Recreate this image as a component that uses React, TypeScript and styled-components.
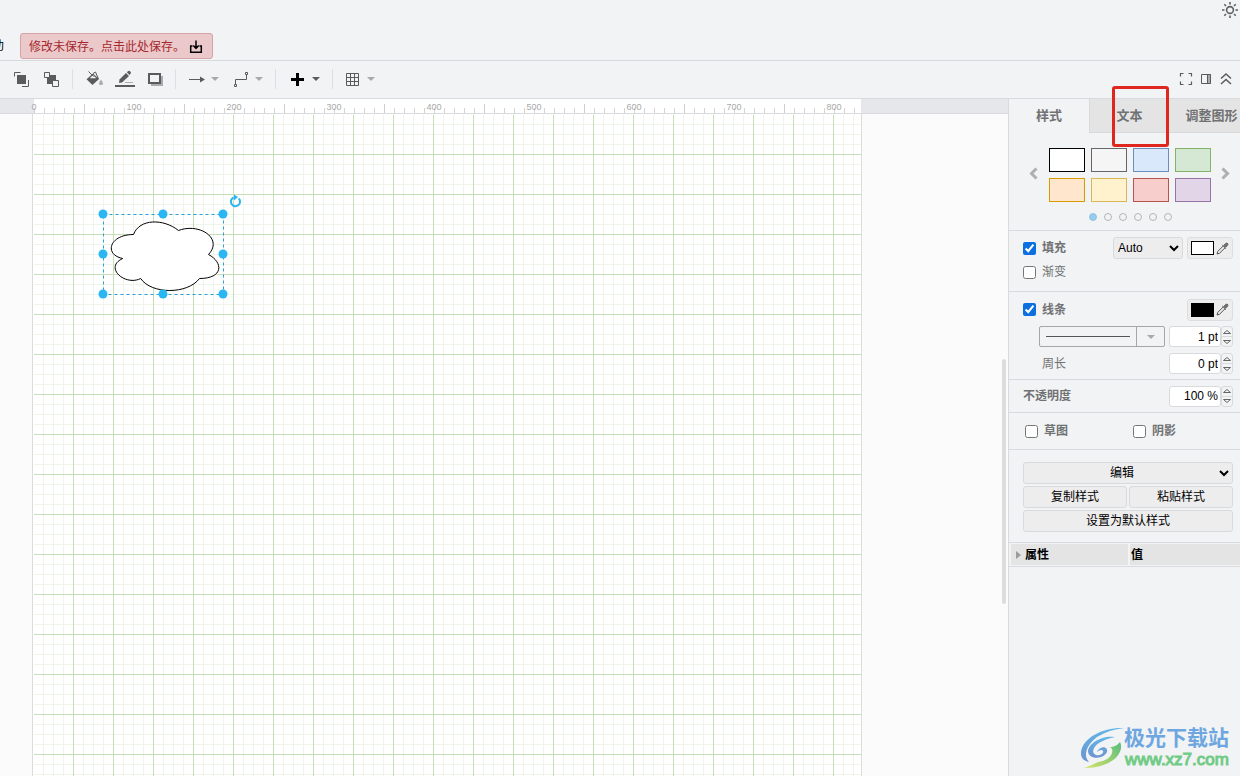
import React from 'react';
import styled, { createGlobalStyle } from 'styled-components';

const GlobalStyle = createGlobalStyle`
  *, *::before, *::after { box-sizing: border-box; }
  body {
    margin: 0;
    background: #f1f3f4;
    color: #000;
    font: 12px/16px "Liberation Sans", "Noto Sans CJK SC", sans-serif;
  }
  button, input, select { font: inherit; color: inherit; margin: 0; }
  button { padding: 0; border: 0; background: none; cursor: pointer; }
  svg { display: block; flex: none; }
`;

const line = '#d8dade';

const Editor = styled.div`
  position: relative;
  display: flex;
  flex-direction: column;
  min-height: 100vh;
  overflow: hidden;
`;

const Header = styled.header`
  display: flex;
  flex-direction: column;
  justify-content: space-between;
  height: 61px;
  padding-bottom: 1px;
  border-bottom: 1px solid ${line};
`;

const HeaderTop = styled.div`
  display: flex;
  justify-content: flex-end;
  padding: 1px 1px 0;
`;

const MenuBar = styled.nav`
  display: flex;
  align-items: center;
  gap: 16px;
`;

const ClippedMenu = styled.div`
  display: flex;
  justify-content: flex-end;
  width: 4px;
  overflow: hidden;
  white-space: nowrap;
  a { color: #000; text-decoration: none; }
`;

const SaveNotice = styled.button`
  display: flex;
  align-items: center;
  gap: 4px;
  height: 26px;
  padding: 1px 9px 0 8px;
  border: 1px solid #d3a3a7;
  border-radius: 3px;
  background: #ebc9cb;
  color: #a5282e;
  white-space: nowrap;
  svg { color: #000; }
`;

const Toolbar = styled.div`
  display: flex;
  align-items: center;
  justify-content: space-between;
  height: 38px;
  padding: 0 6px 1px 12px;
  border-bottom: 1px solid ${line};
`;

const ToolGroup = styled.div<{ $gap: number }>`
  display: flex;
  align-items: center;
  gap: ${p => p.$gap}px;
`;

const ToolButton = styled.button<{ $tone?: string }>`
  display: flex;
  align-items: center;
  gap: 6px;
  color: ${p => p.$tone || '#5a5b5d'};
`;

const Divider = styled.span`
  width: 1px;
  height: 20px;
  background: #dddfe2;
`;

const Main = styled.main`
  display: flex;
  flex: 1;
`;

const Workspace = styled.section`
  position: relative;
  display: flex;
  flex: 1;
  flex-direction: column;
  min-width: 0;
  overflow: hidden;
  background: #fbfbfb;
`;

const Ruler = styled.div`
  height: 15px;
  padding-left: 34px;
  border-bottom: 1px solid ${line};
  background: #e6e7eb;
`;

const RulerScale = styled.div`
  width: 827px;
  height: 14px;
  background:
    linear-gradient(to right, #cfcfcf 1px, transparent 1px) 50px 5px / 100px 9px repeat-x,
    linear-gradient(to right, #d3d3d3 1px, transparent 1px) 0 9px / 10px 5px repeat-x,
    #fff;
`;

const RulerLabels = styled.div`
  display: flex;
  margin-left: -50px;
  span {
    flex: none;
    width: 100px;
    padding-top: 3px;
    color: #a9a9a9;
    font-size: 9px;
    line-height: 10px;
    text-align: center;
  }
`;

const Sheet = styled.div`
  position: relative;
  flex: 1;
  width: 830px;
  margin-left: 32px;
  border: 1px solid #dcdcdc;
  border-width: 0 1px;
  background:
    linear-gradient(#fff, #fff) 0 0 / 100% 1px no-repeat,
    linear-gradient(#fff, #fff) 0 0 / 1px 100% no-repeat,
    linear-gradient(to right, #c6dfb8 1px, transparent 1px) 0 0 / 40px 40px,
    linear-gradient(to bottom, #c6dfb8 1px, transparent 1px) 0 0 / 40px 40px,
    linear-gradient(to right, #f0f5ec 1px, transparent 1px) 0 0 / 10px 10px,
    linear-gradient(to bottom, #f0f5ec 1px, transparent 1px) 0 0 / 10px 10px,
    #fff;
`;

const Selection = styled.svg`
  position: absolute;
  left: 60px;
  top: 75px;
`;

const ScrollThumb = styled.span`
  position: absolute;
  right: 2px;
  top: 260px;
  width: 4px;
  height: 245px;
  border-radius: 2px;
  background: #dcdddf;
`;

const Panel = styled.aside`
  flex: none;
  width: 232px;
  overflow: hidden;
  border-left: 1px solid ${line};
  color: #707173;
`;

const Tabs = styled.div`
  display: flex;
  height: 34px;
`;

const Tab = styled.button<{ $active?: boolean; $last?: boolean }>`
  flex: ${p => (p.$last ? '1 0 0' : '0 0 80px')};
  min-width: 0;
  padding: ${p => (p.$last ? '0 0 0 14px' : '0')};
  border: 0 solid ${line};
  border-width: ${p => (p.$active ? '0' : p.$last ? '0 0 1px' : '0 0 1px 1px')};
  background: ${p => (p.$active ? 'transparent' : '#e4e4e4')};
  font-size: 13px;
  font-weight: 700;
  white-space: nowrap;
`;

const Section = styled.section<{ $pad: string; $gap?: number }>`
  display: flex;
  flex-direction: column;
  gap: ${p => p.$gap || 0}px;
  padding: ${p => p.$pad};
  border-bottom: 1px solid ${line};
`;

const Palette = styled.div`
  display: flex;
  align-items: center;
  justify-content: space-between;
  padding: 0 10px 0 20px;
`;

const PageButton = styled.button`
  padding-bottom: 4px;
`;

const Swatches = styled.div`
  display: grid;
  grid-template-columns: repeat(4, 36px);
  gap: 6px;
`;

const Swatch = styled.button<{ $fill: string; $stroke: string }>`
  height: 24px;
  border: 1px solid ${p => p.$stroke};
  background: ${p => p.$fill};
`;

const Dots = styled.div`
  display: flex;
  justify-content: center;
  gap: 7px;
  padding-left: 11px;
`;

const Dot = styled.button<{ $active?: boolean }>`
  width: 8px;
  height: 8px;
  border: 1px solid ${p => (p.$active ? '#92c5e2' : '#b4b5b7')};
  border-radius: 4px;
  background: ${p => (p.$active ? '#92cdee' : 'transparent')};
`;

const Row = styled.div<{ $h?: number; $indent?: number }>`
  display: flex;
  align-items: center;
  justify-content: space-between;
  gap: 4px;
  height: ${p => p.$h || 24}px;
  padding-left: ${p => p.$indent || 0}px;
`;

const Check = styled.label<{ $light?: boolean }>`
  display: flex;
  align-items: center;
  flex: 1;
  gap: 6px;
  font-weight: ${p => (p.$light ? 400 : 700)};
  input { width: 13px; height: 13px; accent-color: #0b6fe0; }
`;

const Caption = styled.label<{ $strong?: boolean }>`
  flex: 1;
  font-weight: ${p => (p.$strong ? 700 : 400)};
`;

const Select = styled.select<{ $wide?: boolean }>`
  width: ${p => (p.$wide ? '100%' : '70px')};
  height: 22px;
  border: 1px solid ${line};
  border-radius: 3px;
  background-color: #ededee;
  color: #000;
  text-align-last: ${p => (p.$wide ? 'center' : 'left')};
`;

const ColorButton = styled.button`
  display: flex;
  align-items: center;
  gap: 2px;
  width: 46px;
  height: 22px;
  padding: 0 3px;
  border: 1px solid #dcdddf;
  border-radius: 3px;
  background: #ededee;
`;

const ColorChip = styled.span<{ $color: string }>`
  width: 23px;
  height: 14px;
  border: 1px solid #000;
  background: ${p => p.$color};
`;

const LineStyle = styled.button`
  display: flex;
  align-items: center;
  width: 126px;
  height: 21px;
  border: 1px solid #a5a6a8;
  border-radius: 2px;
`;

const LineSample = styled.span`
  flex: 1;
  height: 1px;
  margin: 0 6px;
  background: #555;
`;

const LineCaret = styled.span`
  display: flex;
  align-items: center;
  justify-content: center;
  width: 28px;
  height: 19px;
  border-left: 1px solid #a5a6a8;
`;

const Stepper = styled.div`
  display: flex;
  height: 21px;
  input {
    width: 52px;
    padding: 0 2px;
    border: 1px solid ${line};
    border-radius: 3px;
    background: #fff;
    color: #000;
    text-align: right;
  }
`;

const StepButtons = styled.div`
  display: flex;
  flex-direction: column;
  width: 12px;
  border: 1px solid ${line};
  border-radius: 3px;
  button {
    display: flex;
    flex: 1;
    align-items: center;
    justify-content: center;
  }
  button + button { border-top: 1px solid ${line}; }
`;

const Actions = styled.div`
  display: grid;
  grid-template-columns: 1fr 1fr;
  gap: 2px;
`;

const Action = styled.button<{ $wide?: boolean }>`
  grid-column: ${p => (p.$wide ? '1 / -1' : 'auto')};
  height: 22px;
  border: 1px solid ${line};
  border-radius: 3px;
  background: #ededee;
  color: #000;
`;

const Properties = styled.table`
  width: calc(100% + 2px);
  border-collapse: separate;
  border-spacing: 2px 1px;
  border-bottom: 1px solid ${line};
  table-layout: fixed;
  th {
    height: 21px;
    padding: 0 1px;
    background: #e4e4e4;
    color: #000;
    font-weight: 700;
    text-align: left;
  }
  th:first-child { width: 117px; padding-left: 5px; }
  button { display: flex; align-items: center; gap: 4px; font-weight: 700; color: #000; }
`;

const Highlight = styled.div`
  position: absolute;
  top: 86px;
  right: 71px;
  width: 57px;
  height: 61px;
  border: 3px solid #e0271f;
  border-radius: 3px;
  pointer-events: none;
`;

const Watermark = styled.div`
  position: absolute;
  right: 11px;
  bottom: 6px;
  display: flex;
  align-items: center;
`;

const WatermarkText = styled.div`
  display: flex;
  flex-direction: column;
  color: #6ea6df;
  font-size: 21px;
  font-weight: 700;
  line-height: 24px;
  white-space: nowrap;
  span {
    padding-left: 1px;
    color: #72cb87;
    font: 500 17px/20px "Liberation Sans", sans-serif;
    -webkit-text-stroke: 1px #72cb87;
  }
`;

const Caret = ({ color = '#a9a9aa' }: { color?: string }) => (
  <svg width="8" height="4" viewBox="0 0 8 4"><path d="M0 0h8L4 4z" fill={color} /></svg>
);

const Pipette = () => (
  <svg width="13" height="13" viewBox="0 0 13 13" fill="none" stroke="#555" strokeWidth="1">
    <path d="M7.2 4 1.8 9.4 1 12l2.600-.8L9 5.800" />
    <path d="m6.300 3 3.700 3.700M7.800 3.400l2.200-2q1-.6 1.600.1.600.7 0 1.500L9.600 5.200z" fill="#777" />
  </svg>
);

const Step = ({ up }: { up?: boolean }) => (
  <svg width="8" height="4" viewBox="0 0 8 4" fill="none" stroke="#666">
    <path d={up ? 'M.5 3.500h7L4 .5z' : 'M.5 .5h7L4 3.500z'} />
  </svg>
);

const Chevron = ({ left }: { left?: boolean }) => (
  <svg width="9" height="13" viewBox="0 0 9 13" fill="none" stroke="#aeafb1" strokeWidth="3">
    <path d={left ? 'M7.500 1.500l-5 5 5 5' : 'M1.500 1.500l5 5-5 5'} />
  </svg>
);

function NumberField({ id, label, value }: { id: string; label: string; value: string }) {
  return (
    <Stepper>
      <input id={id} aria-label={label} defaultValue={value} />
      <StepButtons>
        <button aria-label={`${label} +`}><Step up /></button>
        <button aria-label={`${label} -`}><Step /></button>
      </StepButtons>
    </Stepper>
  );
}

function ColorPicker({ color, label }: { color: string; label: string }) {
  return (
    <ColorButton aria-label={label}>
      <ColorChip $color={color} />
      <Pipette />
    </ColorButton>
  );
}

const palette = [
  ['#ffffff', '#000000'], ['#f5f5f5', '#666666'], ['#dae8fc', '#6c8ebf'], ['#d5e8d4', '#82b366'],
  ['#ffe6cc', '#d79b00'], ['#fff2cc', '#d6b656'], ['#f8cecc', '#b85450'], ['#e1d5e7', '#9673a6'],
];

const handles = [
  [10, 25], [70, 25], [130, 25], [10, 65], [130, 65], [10, 105], [70, 105], [130, 105],
];

const marks = [0, 100, 200, 300, 400, 500, 600, 700, 800];

export default function App() {
  return (
    <Editor>
      <GlobalStyle />
      <Header>
        <HeaderTop>
          <ToolButton aria-label="外观" $tone="#5f6062">
            <svg width="18" height="18" viewBox="0 0 18 18" fill="none" stroke="currentColor" strokeWidth="1.600">
              <circle cx="9" cy="9" r="3.400" />
              <path d="M9 1v2.500M9 14.500V17M1 9h2.500M14.500 9H17M3.300 3.300 5 5M13 13l1.700 1.700M3.300 14.700 5 13M13 5l1.700-1.700" />
            </svg>
          </ToolButton>
        </HeaderTop>
        <MenuBar>
          <ClippedMenu><a href="#help">帮助</a></ClippedMenu>
          <SaveNotice>
            修改未保存。点击此处保存。
            <svg width="14" height="14" viewBox="0 0 14 14" fill="none" stroke="currentColor" strokeWidth="1.500">
              <path d="M3.500 6H1.700v6.200h10.600V6h-1.800M7 .5V8M4.300 5.500 7 8.300l2.700-2.800" />
            </svg>
          </SaveNotice>
        </MenuBar>
      </Header>

      <Toolbar>
        <ToolGroup $gap={12}>
          <ToolButton aria-label="移至最前">
            <svg width="18" height="18" viewBox="0 0 18 18" fill="none" stroke="currentColor">
              <path d="M5 5h9v9H5z" fill="currentColor" stroke="none" />
              <path d="M2.500 6.500v-4h6M16.500 10v6.500H10" />
            </svg>
          </ToolButton>
          <ToolButton aria-label="移至最后">
            <svg width="18" height="18" viewBox="0 0 18 18" fill="none" stroke="currentColor">
              <path d="M5 5h9v9H5z" fill="currentColor" stroke="none" />
              <path d="M2.500 2.500h5v5h-5zM10.500 10.500h6v6h-6z" fill="#f1f3f4" />
            </svg>
          </ToolButton>
          <Divider />
          <ToolButton aria-label="填充颜色">
            <svg width="18" height="18" viewBox="0 0 18 18">
              <path d="M8 3.500 1.500 9.300 7.500 15l6.500-6z" fill="currentColor" />
              <path d="M8 5 4.800 8.300h6.500z" fill="#f1f3f4" />
              <path d="m3.500 1.500 5 5M8 3.500l2.500-1.500 3 7" fill="none" stroke="currentColor" />
              <path d="M16 9.500q4 5.500 0 5.500t0-5.500" fill="#aaabad" />
            </svg>
          </ToolButton>
          <ToolButton aria-label="线条颜色">
            <svg width="20" height="18" viewBox="0 0 20 18">
              <path d="M0 15h20v2H0z" fill="currentColor" />
              <path d="m4 13 .5-3.500L11 3l3 3-7 6.500z" fill="currentColor" />
              <path d="m11.800 2.200 1.200-1q1.200-.8 2.300.3t.3 2.300l-1 1.200z" fill="currentColor" />
              <path d="M10 12.500h8" stroke="#aaabad" />
            </svg>
          </ToolButton>
          <ToolButton aria-label="阴影">
            <svg width="16" height="18" viewBox="0 0 16 18">
              <path d="M4 6h12v10H4z" fill="#aaabad" />
              <path d="M2 4h11v9H2z" fill="#f1f3f4" stroke="currentColor" strokeWidth="2" />
            </svg>
          </ToolButton>
          <Divider />
          <ToolButton aria-label="连接">
            <svg width="17" height="18" viewBox="0 0 17 18">
              <path d="M1 9.500h12" stroke="currentColor" />
              <path d="m12 6.500 5 3-5 3z" fill="currentColor" />
            </svg>
            <Caret />
          </ToolButton>
          <ToolButton aria-label="航点">
            <svg width="18" height="18" viewBox="0 0 18 18" fill="none" stroke="currentColor">
              <path d="M4.500 14V9.500h11V5M3.500 14.500h2v2h-2zM14.500 2.500h2v2h-2z" />
            </svg>
            <Caret />
          </ToolButton>
          <Divider />
          <ToolButton aria-label="插入" $tone="#000">
            <svg width="18" height="18" viewBox="0 0 18 18">
              <path d="M8 3h3v5h5v3h-5v5H8v-5H3V8h5z" fill="currentColor" />
            </svg>
            <Caret color="#5a5b5d" />
          </ToolButton>
          <Divider />
          <ToolButton aria-label="表格">
            <svg width="16" height="18" viewBox="0 0 16 18" fill="none" stroke="currentColor">
              <path d="M1.500 3.500h12v12h-12zM1.500 7.500h12M1.500 11.500h12M5.500 3.500v12M9.500 3.500v12" />
            </svg>
            <Caret />
          </ToolButton>
        </ToolGroup>
        <ToolGroup $gap={4}>
          <ToolButton aria-label="全屏">
            <svg width="16" height="16" viewBox="0 0 16 16" fill="none" stroke="currentColor" strokeWidth="1.200">
              <path d="M2.500 5.500v-3h3M10.500 2.500h3v3M13.500 10.500v3h-3M5.500 13.500h-3v-3" />
            </svg>
          </ToolButton>
          <ToolButton aria-label="格式面板">
            <svg width="16" height="16" viewBox="0 0 16 16">
              <path d="M9 3h4v10H9z" fill="#aaabad" />
              <path d="M3.500 3.500h9v9h-9zM9.500 3.500v9" fill="none" stroke="currentColor" />
            </svg>
          </ToolButton>
          <ToolButton aria-label="折叠">
            <svg width="16" height="16" viewBox="0 0 16 16" fill="none" stroke="currentColor" strokeWidth="1.500">
              <path d="m3 7.500 5-4.500 5 4.500M3 13l5-4.500 5 4.500" />
            </svg>
          </ToolButton>
        </ToolGroup>
      </Toolbar>

      <Main>
        <Workspace>
          <Ruler>
            <RulerScale>
              <RulerLabels>{marks.map(m => <span key={m}>{m}</span>)}</RulerLabels>
            </RulerScale>
          </Ruler>
          <Sheet>
            <Selection width="150" height="115" viewBox="0 0 150 115">
              <path
                transform="translate(10.5 25.5)"
                d="M30 20C6 20 0 40 19.200 44 0 52.800 21.600 72 37.200 64 48 80 84 80 96 64c24 0 24-16 9-24C120 24 96 8 75 16 60 4 36 4 30 20z"
                fill="#fff"
                stroke="#000"
              />
              <path d="M10.500 25.500h120v80h-120z" fill="none" stroke="#2d9fd8" strokeDasharray="3 3" />
              {handles.map(([x, y]) => <circle key={`${x}-${y}`} cx={x} cy={y} r="4.500" fill="#29b6f2" />)}
              <path d="M145.800 9.500A4.600 4.600 0 1 1 140.500 8.500" fill="none" stroke="#29b6f2" strokeWidth="2" />
              <path d="M141 5.500v6l4-3.500z" fill="#29b6f2" />
            </Selection>
          </Sheet>
          <ScrollThumb />
        </Workspace>

        <Panel>
          <Tabs>
            <Tab $active>样式</Tab>
            <Tab>文本</Tab>
            <Tab $last>调整图形</Tab>
          </Tabs>
          <Section $pad="15px 0 9px" $gap={11}>
            <Palette>
              <PageButton aria-label="上一页"><Chevron left /></PageButton>
              <Swatches>
                {palette.map(([fill, stroke]) => (
                  <Swatch key={fill} aria-label={fill} $fill={fill} $stroke={stroke} />
                ))}
              </Swatches>
              <PageButton aria-label="下一页"><Chevron /></PageButton>
            </Palette>
            <Dots>
              {[1, 2, 3, 4, 5, 6].map(n => <Dot key={n} aria-label={`${n}`} $active={n === 1} />)}
            </Dots>
          </Section>

          <Section $pad="5px 7px 7px 14px">
            <Row>
              <Check><input type="checkbox" defaultChecked />填充</Check>
              <Select aria-label="填充方式"><option>Auto</option></Select>
              <ColorPicker color="#fff" label="填充颜色" />
            </Row>
            <Row>
              <Check $light><input type="checkbox" />渐变</Check>
            </Row>
          </Section>

          <Section $pad="4px 7px 2px 14px">
            <Row $h={27}>
              <Check><input type="checkbox" defaultChecked />线条</Check>
              <ColorPicker color="#000" label="线条颜色" />
            </Row>
            <Row $h={27} $indent={16}>
              <LineStyle aria-label="线条样式">
                <LineSample />
                <LineCaret><Caret /></LineCaret>
              </LineStyle>
              <NumberField id="width" label="线宽" value="1 pt" />
            </Row>
            <Row $h={27} $indent={19}>
              <Caption htmlFor="perimeter">周长</Caption>
              <NumberField id="perimeter" label="周长" value="0 pt" />
            </Row>
          </Section>

          <Section $pad="4px 7px 4px 14px">
            <Row>
              <Caption $strong htmlFor="opacity">不透明度</Caption>
              <NumberField id="opacity" label="不透明度" value="100 %" />
            </Row>
          </Section>

          <Section $pad="6px 3px 6px 16px">
            <Row>
              <Check><input type="checkbox" />草图</Check>
              <Check><input type="checkbox" />阴影</Check>
            </Row>
          </Section>

          <Section $pad="12px 7px 10px 14px" $gap={2}>
            <Select $wide aria-label="编辑"><option>编辑</option></Select>
            <Actions>
              <Action>复制样式</Action>
              <Action>粘贴样式</Action>
              <Action $wide>设置为默认样式</Action>
            </Actions>
          </Section>

          <Properties>
            <thead>
              <tr>
                <th scope="col">
                  <button>
                    <svg width="5" height="8" viewBox="0 0 5 8"><path d="M0 0v8l5-4z" fill="#9b9b9b" /></svg>
                    属性
                  </button>
                </th>
                <th scope="col">值</th>
              </tr>
            </thead>
          </Properties>
        </Panel>
      </Main>

      <Highlight />

      <Watermark>
        <svg width="44" height="42" viewBox="0 0 44 42">
          <defs>
            <linearGradient id="swirl" x1="0" y1="0" x2="0" y2="1">
              <stop offset="0" stopColor="#62b5ea" />
              <stop offset="1" stopColor="#6c93cf" />
            </linearGradient>
            <linearGradient id="leaf" x1="1" y1="0" x2="0" y2="1">
              <stop offset="0" stopColor="#58bd7c" />
              <stop offset="1" stopColor="#d6e26a" />
            </linearGradient>
          </defs>
          <path d="M44 1C24 0 3 10 1 25c-.5 6 3 9 8 10C3 29 6 18 17 10 25 5 34 2 44 1z" fill="url(#swirl)" />
          <path d="M35 10C22 8 9 16 8 24c0 6 7 8 13 6 5-2 8-6 5-9-3-2-8 1-9 4 2-2 5-3 6-1 1 3-4 5-7 4-5-2-3-8 3-12 5-3 10-5 16-6z" fill="url(#swirl)" />
          <path d="M40 15c4 8-3 18-14 22-7 3-15 4-22 4 6-2 10-4 14-6 8-1 13-5 14-9 1-3 0-5-2-6 3 0 7-1 10-5z" fill="url(#leaf)" />
        </svg>
        <WatermarkText>
          极光下载站
          <span>www.xz7.com</span>
        </WatermarkText>
      </Watermark>
    </Editor>
  );
}
